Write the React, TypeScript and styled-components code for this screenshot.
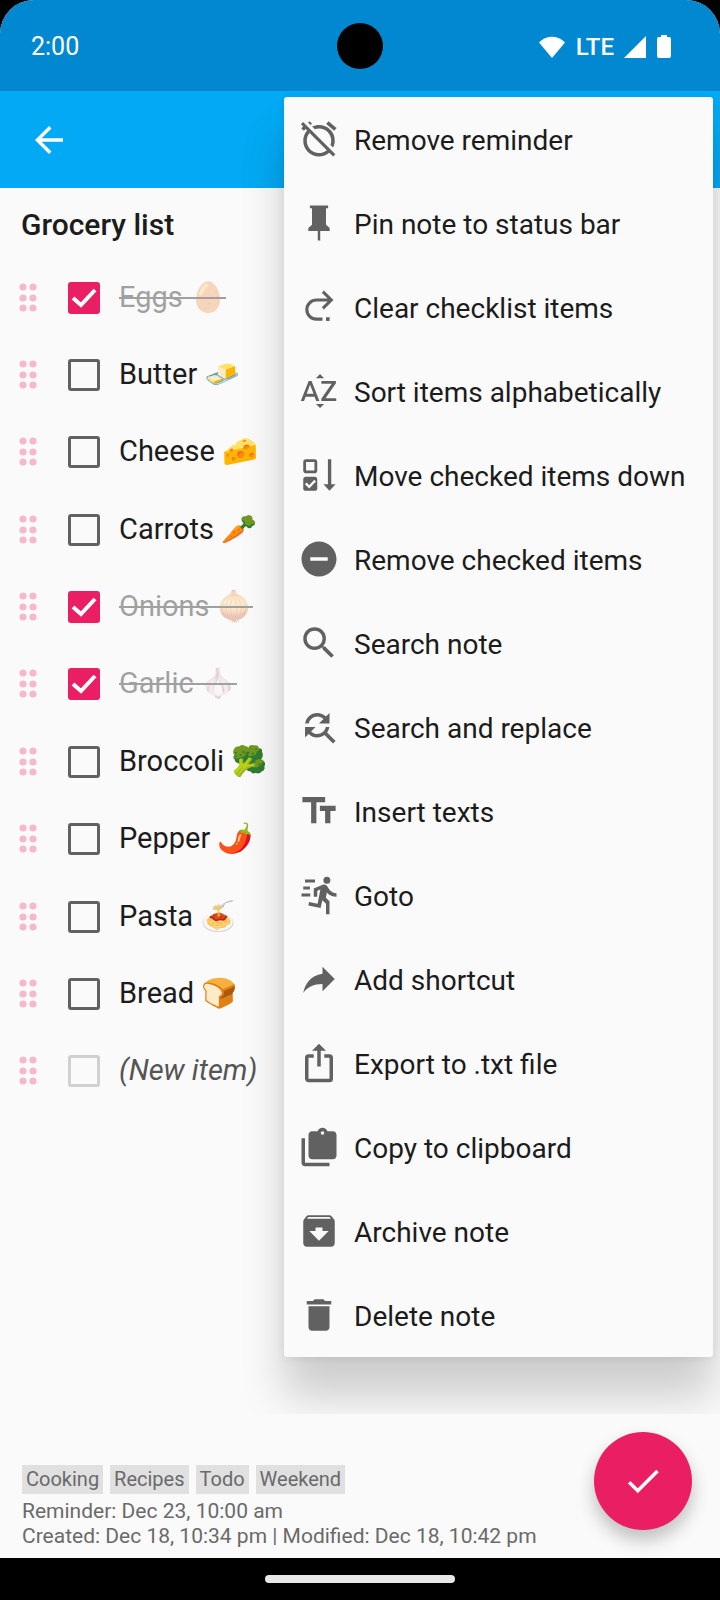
import React from "react";
import styled, { createGlobalStyle } from "styled-components";
import {
  MdAlarmOff,
  MdArchive,
  MdArrowBack,
  MdCheck,
  MdDelete,
  MdFindReplace,
  MdRemoveCircle,
  MdSearch,
  MdSortByAlpha,
  MdTextFields,
} from "react-icons/md";

const GlobalStyle = createGlobalStyle`
  *, *::before, *::after { box-sizing: border-box; }
  body {
    margin: 0;
    background: #000;
    font-family: Roboto, "Noto Color Emoji", sans-serif;
    color: #1c1c1c;
  }
`;

const Screen = styled.div`
  position: relative;
  display: flex;
  flex-direction: column;
  min-height: 100vh;
  overflow: hidden;
  background: #fafafa;
  border-radius: 34px 34px 0 0;
`;

const StatusBar = styled.header`
  position: relative;
  display: flex;
  align-items: center;
  justify-content: space-between;
  height: 91px;
  padding: 2px 48px 0 31px;
  background: #0288d1;
  color: #fff;
`;

const Clock = styled.time`
  font-size: 25px;
  line-height: 30px;
`;

const Camera = styled.span`
  position: absolute;
  top: 23px;
  left: calc(50% - 23px);
  width: 46px;
  height: 46px;
  border-radius: 50%;
  background: #000;
`;

const Indicators = styled.div`
  display: flex;
  align-items: center;
  gap: 10px;
`;

const Network = styled.span`
  font-size: 24px;
  font-weight: 500;
  line-height: 30px;
`;

const AppBar = styled.nav`
  display: flex;
  align-items: center;
  height: 97px;
  padding: 0 28px;
  background: #03a9f4;
`;

const BackButton = styled.button`
  display: grid;
  place-items: center;
  width: 42px;
  height: 42px;
  padding: 0;
  border: 0;
  background: none;
  color: #fff;
`;

const Note = styled.main`
  flex: 1;
`;

const Title = styled.h1`
  margin: 0;
  padding: 3px 21px 0;
  font-size: 30px;
  font-weight: 500;
  line-height: 68px;
`;

const Checklist = styled.ul`
  display: grid;
  grid-auto-rows: 1fr;
  height: 851px;
  margin: 0;
  padding: 0;
  list-style: none;
`;

const Row = styled.li`
  display: flex;
  align-items: center;
  padding-left: 19px;
`;

const Handle = styled.svg`
  flex: none;
  width: 18px;
  height: 30px;
  margin-right: 31px;
  fill: #f6b8cd;
`;

const ItemLabel = styled.label`
  display: flex;
  align-items: center;
  gap: 19px;
`;

const BoxWrap = styled.span`
  position: relative;
  display: flex;
`;

const Box = styled.input`
  appearance: none;
  width: 32px;
  height: 32px;
  margin: 0;
  border: 3px solid #616161;
  border-radius: 3px;
  &:checked {
    border-color: #e91e63;
    background: #e91e63;
  }
  &:disabled {
    border-color: #d0d0d0;
  }
`;

const Tick = styled.svg`
  position: absolute;
  inset: 0;
  width: 32px;
  height: 32px;
  fill: none;
  stroke: #fff;
  stroke-width: 4;
  pointer-events: none;
`;

const ItemText = styled.span<{ $done: boolean }>`
  padding-bottom: 2px;
  font-size: 29px;
  line-height: 36px;
  white-space: pre;
  opacity: ${(p) => (p.$done ? 0.4 : 1)};
  text-decoration: ${(p) => (p.$done ? "line-through" : "none")};
  text-decoration-thickness: 2px;
`;

const NewItem = styled.input`
  width: 160px;
  padding: 0 0 2px;
  border: 0;
  background: none;
  font: italic 400 29px/36px Roboto, sans-serif;
  color: #1c1c1c;
  &::placeholder {
    color: #555;
    opacity: 1;
  }
`;

const Menu = styled.div`
  position: absolute;
  z-index: 1;
  top: 97px;
  right: 7px;
  width: 429px;
  border-radius: 3px;
  background: #fafafa;
  box-shadow: 0 40px 44px rgba(0, 0, 0, 0.18), 0 2px 10px rgba(0, 0, 0, 0.08);
`;

const MenuItem = styled.button`
  display: flex;
  align-items: center;
  gap: 14px;
  width: 100%;
  height: 84px;
  padding: 0 14px;
  border: 0;
  background: none;
  font: 400 28px/36px Roboto, sans-serif;
  color: #1c1c1c;
  text-align: left;
  white-space: nowrap;
  svg {
    flex: none;
    width: 42px;
    height: 42px;
    color: #616161;
  }
`;

const MenuLabel = styled.span`
  padding-top: 3px;
`;

const Footer = styled.footer`
  position: relative;
  z-index: 2;
  padding: 51px 22px 9px;
  background: #fafafa;
  color: #6a6a6a;
`;

const Tags = styled.div`
  display: flex;
  gap: 7px;
  margin-bottom: 5px;
`;

const Tag = styled.span`
  padding: 0 4px;
  background: #e0e0e0;
  font-size: 20px;
  line-height: 29px;
`;

const Meta = styled.p`
  margin: 0;
  font-size: 21px;
  line-height: 25px;
`;

const SaveButton = styled.button`
  position: absolute;
  top: 18px;
  right: 28px;
  display: grid;
  place-items: center;
  width: 98px;
  height: 98px;
  padding: 0;
  border: 0;
  border-radius: 50%;
  background: #e91e63;
  color: #fff;
  box-shadow: 0 10px 18px rgba(0, 0, 0, 0.24);
`;

const SystemBar = styled.div`
  position: relative;
  z-index: 2;
  display: flex;
  align-items: center;
  justify-content: center;
  height: 42px;
  background: #000;
`;

const HomePill = styled.span`
  width: 190px;
  height: 8px;
  border-radius: 4px;
  background: #e8e8e8;
`;

const glyph = { viewBox: "0 0 24 24", fill: "currentColor", "aria-hidden": true } as const;

const PinIcon = () => (
  <svg {...glyph}>
    <path d="M16 13V3.600h1.200V2H6.800v1.600H8V13l-2.100 1.900v1.600h5.400v5.500h1.400v-5.500h5.400v-1.600z" />
  </svg>
);

const ClearIcon = () => (
  <svg {...glyph} fill="none" stroke="currentColor" strokeWidth="1.8">
    <path d="M19 8h-8.500a5.400 5.400 0 0 0 0 10.900H14M14.200 3.200 19 8l-4.800 4.800" />
    <path d="M16 18.900h2.100" strokeWidth="2.1" />
  </svg>
);

const MoveDownIcon = () => (
  <svg {...glyph}>
    <rect x="3.8" y="3.8" width="6.4" height="6.4" rx=".8" fill="none" stroke="currentColor" strokeWidth="1.6" />
    <rect x="3" y="13" width="8" height="8" rx="1.5" />
    <path d="m4.400 16.800 2 2 3.400-3.600" fill="none" stroke="#fafafa" strokeWidth="1.3" />
    <path d="M17.100 3H19v14.300h2.500L18 21l-3.500-3.700h2.600z" />
  </svg>
);

const RunIcon = () => (
  <svg {...glyph}>
    <path d="M16.5 5.5a2 2 0 0 0 2-2 2 2 0 0 0-2-2 2 2 0 0 0-2 2 2 2 0 0 0 2 2m-3.6 13.9 1-4.4 2.1 2v6h2v-7.5l-2.1-2 .6-3A7.3 7.3 0 0 0 22 13v-2c-1.76.03-3.4-.89-4.3-2.4l-1-1.6c-.36-.6-1-1-1.7-1-.3 0-.5.1-.8.1L9 8.3V13h2V9.6l1.8-.7-1.6 8.1-4.9-1-.4 2 7 1.4" />
    <path d="M4 3.100h5.700v1.700H4zM3 7.200h3.800v1.700H3zM2 11.200h5v1.700H2z" />
  </svg>
);

const ShortcutIcon = () => (
  <svg {...glyph}>
    <path d="m21 12-7-7v4C7 10 4 15 3 20c2.500-3.500 6-5.100 11-5.100V19l7-7z" />
  </svg>
);

const ExportIcon = () => (
  <svg {...glyph}>
    <path d="M12 1 8 5h3v9h2V5h3m2 18H6c-1.110 0-2-.9-2-2V9a2 2 0 0 1 2-2h3v2H6v12h12V9h-3V7h3a2 2 0 0 1 2 2v12a2 2 0 0 1-2 2z" />
  </svg>
);

const ClipboardIcon = () => (
  <svg {...glyph}>
    <path d="M4 7v14h14v2H4c-1.100 0-2-.9-2-2V7h2m16-4c1.100 0 2 .9 2 2v12c0 1.100-.9 2-2 2H8c-1.100 0-2-.9-2-2V5c0-1.100.9-2 2-2h3.180c.42-1.160 1.520-2 2.820-2s2.400.84 2.820 2H20m-6 0a1 1 0 0 0-1 1 1 1 0 0 0 1 1 1 1 0 0 0 1-1 1 1 0 0 0-1-1" />
  </svg>
);

const actions: { label: string; Icon: React.ComponentType }[] = [
  { label: "Remove reminder", Icon: MdAlarmOff },
  { label: "Pin note to status bar", Icon: PinIcon },
  { label: "Clear checklist items", Icon: ClearIcon },
  { label: "Sort items alphabetically", Icon: MdSortByAlpha },
  { label: "Move checked items down", Icon: MoveDownIcon },
  { label: "Remove checked items", Icon: MdRemoveCircle },
  { label: "Search note", Icon: MdSearch },
  { label: "Search and replace", Icon: MdFindReplace },
  { label: "Insert texts", Icon: MdTextFields },
  { label: "Goto", Icon: RunIcon },
  { label: "Add shortcut", Icon: ShortcutIcon },
  { label: "Export to .txt file", Icon: ExportIcon },
  { label: "Copy to clipboard", Icon: ClipboardIcon },
  { label: "Archive note", Icon: MdArchive },
  { label: "Delete note", Icon: MdDelete },
];

const items = [
  { text: "Eggs 🥚", done: true },
  { text: "Butter 🧈", done: false },
  { text: "Cheese 🧀", done: false },
  { text: "Carrots 🥕", done: false },
  { text: "Onions 🧅", done: true },
  { text: "Garlic 🧄", done: true },
  { text: "Broccoli 🥦", done: false },
  { text: "Pepper 🌶️", done: false },
  { text: "Pasta 🍝", done: false },
  { text: "Bread 🍞", done: false },
];

const DragHandle = () => (
  <Handle viewBox="0 0 18 30" aria-hidden>
    {[4, 15, 25].map((y) => (
      <React.Fragment key={y}>
        <circle cx="4" cy={y} r="3.6" />
        <circle cx="14" cy={y} r="3.6" />
      </React.Fragment>
    ))}
  </Handle>
);

export default function App() {
  return (
    <>
      <GlobalStyle />
      <Screen>
        <StatusBar>
          <Clock>2:00</Clock>
          <Camera />
          <Indicators>
            <svg width="28" height="24" viewBox="0 0 28 24" fill="#fff" aria-hidden>
              <path d="M1 7.500C8-.3 20-.3 27 7.500L14 23z" />
            </svg>
            <Network>LTE</Network>
            <svg width="22" height="22" viewBox="0 0 22 22" fill="#fff" aria-hidden>
              <path d="M22 0v22H0z" />
            </svg>
            <svg width="16" height="24" viewBox="0 0 16 24" fill="#fff" aria-hidden>
              <path d="M5 0h6v2h2a2 2 0 0 1 2 2v17a2 2 0 0 1-2 2H3a2 2 0 0 1-2-2V4a2 2 0 0 1 2-2h2z" />
            </svg>
          </Indicators>
        </StatusBar>
        <AppBar>
          <BackButton aria-label="Back">
            <MdArrowBack size={42} />
          </BackButton>
        </AppBar>
        <Note>
          <Title>Grocery list</Title>
          <Checklist>
            {items.map((item) => (
              <Row key={item.text}>
                <DragHandle />
                <ItemLabel>
                  <BoxWrap>
                    <Box type="checkbox" defaultChecked={item.done} />
                    {item.done && (
                      <Tick viewBox="0 0 32 32" aria-hidden>
                        <path d="m5 16 8 7L27 8" />
                      </Tick>
                    )}
                  </BoxWrap>
                  <ItemText $done={item.done}>{item.text}</ItemText>
                </ItemLabel>
              </Row>
            ))}
            <Row>
              <DragHandle />
              <ItemLabel>
                <Box type="checkbox" disabled aria-label="New item done" />
                <NewItem placeholder="(New item)" aria-label="New item" />
              </ItemLabel>
            </Row>
          </Checklist>
        </Note>
        <Menu role="menu">
          {actions.map(({ label, Icon }) => (
            <MenuItem key={label} role="menuitem">
              <Icon />
              <MenuLabel>{label}</MenuLabel>
            </MenuItem>
          ))}
        </Menu>
        <Footer>
          <Tags>
            {["Cooking", "Recipes", "Todo", "Weekend"].map((tag) => (
              <Tag key={tag}>{tag}</Tag>
            ))}
          </Tags>
          <Meta>Reminder: Dec 23, 10:00 am</Meta>
          <Meta>Created: Dec 18, 10:34 pm | Modified: Dec 18, 10:42 pm</Meta>
          <SaveButton aria-label="Save note">
            <MdCheck size={42} />
          </SaveButton>
        </Footer>
        <SystemBar>
          <HomePill />
        </SystemBar>
      </Screen>
    </>
  );
}
